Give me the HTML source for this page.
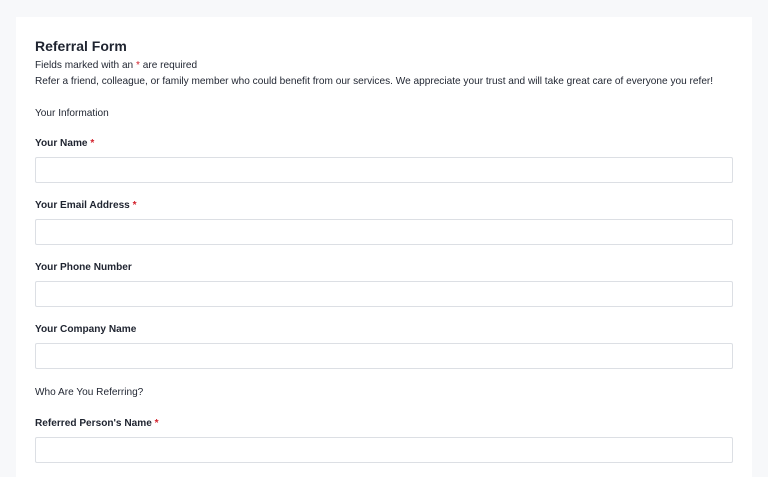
<!DOCTYPE html>
<html><head><style>
html,body{margin:0;padding:0}
body{width:768px;height:460px;background:#f7f8fa;font-family:"Liberation Sans",sans-serif;color:#1f2430;position:relative;overflow:hidden}
.card{position:absolute;left:16px;top:17px;width:736px;height:460px;background:#fff}
.t{position:absolute;left:35px;white-space:nowrap;font-size:10.1px;line-height:12px}
.h{font-size:14px;font-weight:bold;line-height:17px}
.l{font-weight:bold;color:#1f2430}
.s{color:#d21f2a}
.i{position:absolute;left:35px;width:696px;height:24px;border:1px solid #dcdfe4;border-radius:2px;background:#fff}
</style></head><body>
<div class="card"></div>
<div class="t h" style="top:38px">Referral Form</div>
<div class="t" style="top:60px">Fields marked with an <span class="s">*</span> are required</div>
<div class="t" style="top:76px">Refer a friend, colleague, or family member who could benefit from our services. We appreciate your trust and will take great care of everyone you refer!</div>
<div class="t" style="top:108px">Your Information</div>
<div class="t l" style="top:138px">Your Name <span class="s">*</span></div>
<div class="i" style="top:157px"></div>
<div class="t l" style="top:200px">Your Email Address <span class="s">*</span></div>
<div class="i" style="top:219px"></div>
<div class="t l" style="top:262px">Your Phone Number</div>
<div class="i" style="top:281px"></div>
<div class="t l" style="top:324px">Your Company Name</div>
<div class="i" style="top:343px"></div>
<div class="t" style="top:387px">Who Are You Referring?</div>
<div class="t l" style="top:418px">Referred Person's Name <span class="s">*</span></div>
<div class="i" style="top:437px"></div>
</body></html>
